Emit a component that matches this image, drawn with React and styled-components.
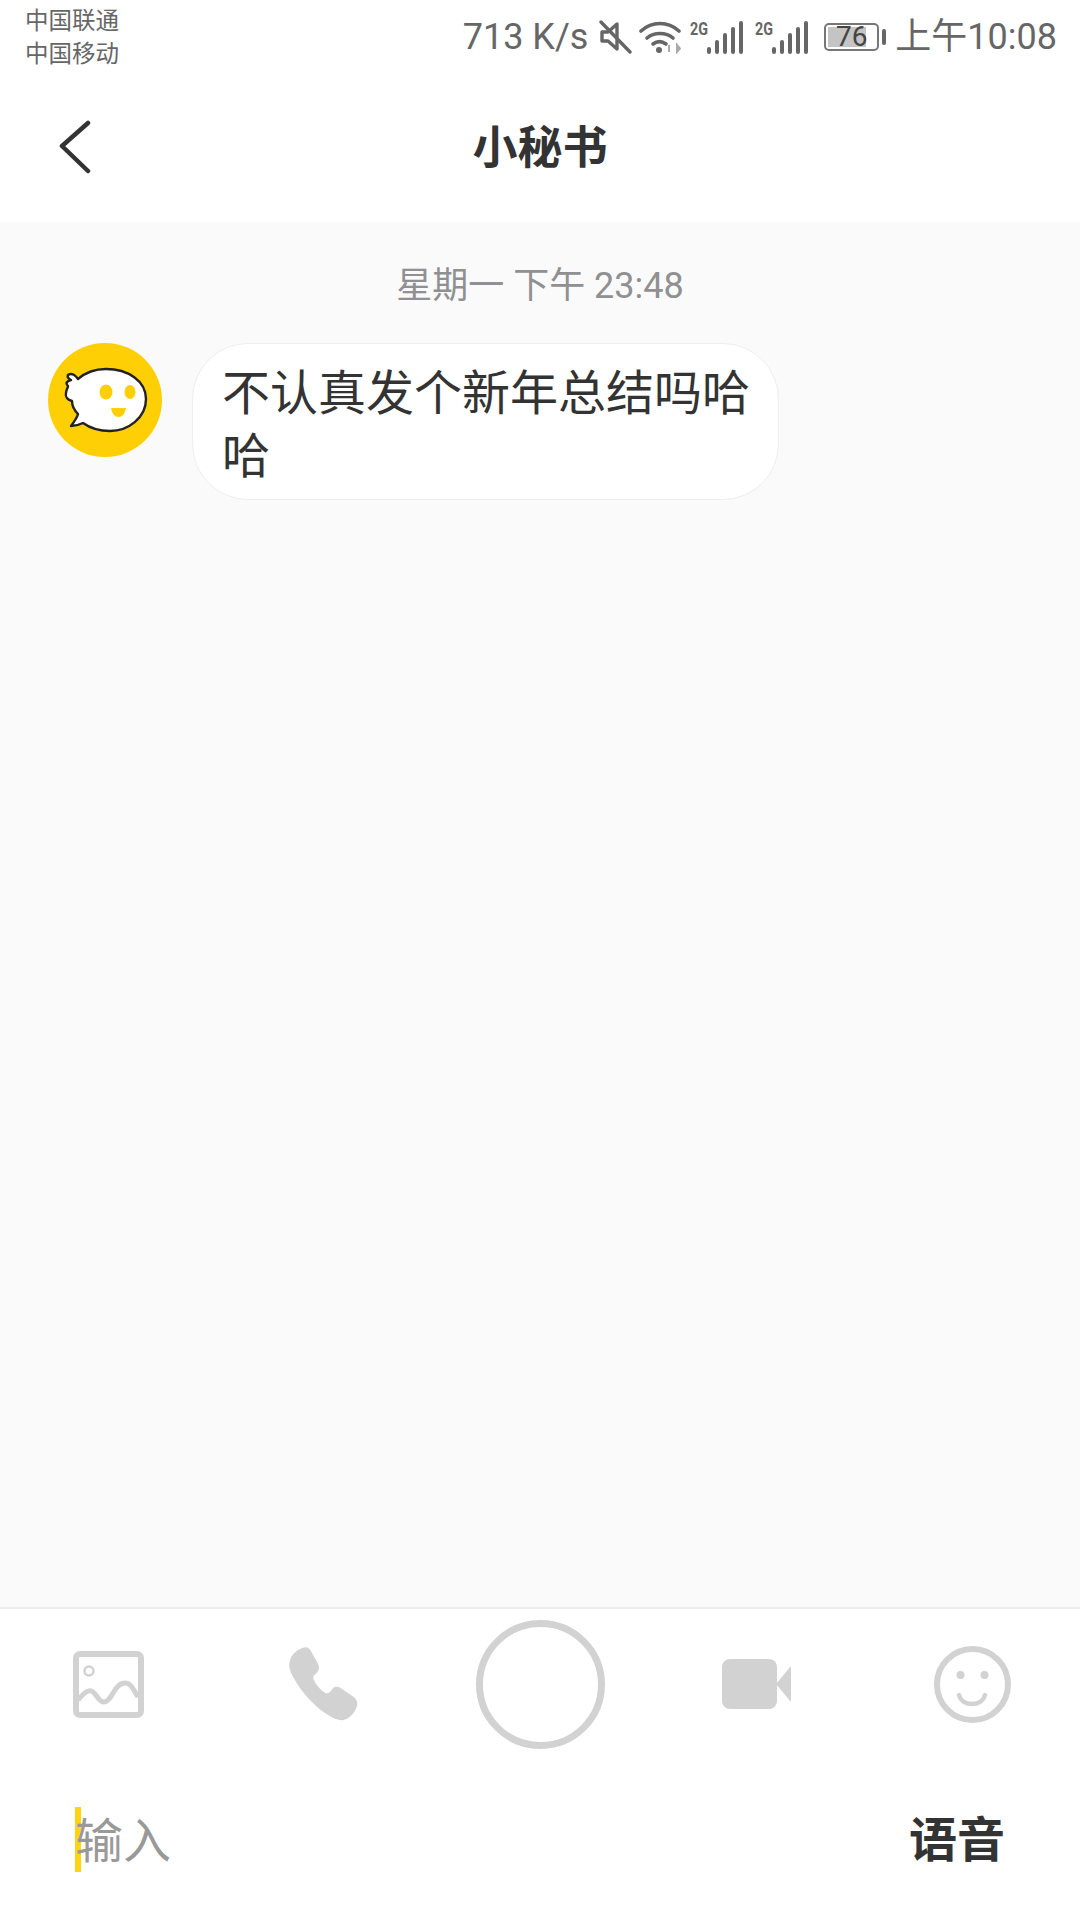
import React from "react";
import styled, { createGlobalStyle } from "styled-components";

const GlobalStyle = createGlobalStyle`
  html, body {
    margin: 0;
    padding: 0;
    background: #fff;
  }
  body {
    font-family: Roboto, "Noto Sans CJK SC", sans-serif;
  }
`;

const Page = styled.div`
  width: 1080px;
  height: 1920px;
  display: flex;
  flex-direction: column;
  background: #fff;
  overflow: hidden;
`;

const StatusBar = styled.div`
  height: 74px;
  flex: none;
  display: flex;
  align-items: center;
  justify-content: space-between;
  padding: 0 23px 0 25px;
  color: #666;
`;

const Carriers = styled.div`
  font-size: 23.5px;
  line-height: 33px;
  margin-top: 1px;
  color: #666;
`;

const StatusRight = styled.div`
  display: flex;
  align-items: center;
  height: 36px;
`;

const Speed = styled.span`
  font-size: 36px;
  line-height: 36px;
  margin-right: 11px;
`;

const StatusIcon = styled.svg`
  display: block;
  flex: none;
  margin-right: ${(p) => p.$gap || 0}px;
`;

const SignalSvg = styled(StatusIcon)`
  margin-top: -6px;
`;

const Battery = styled.div`
  position: relative;
  width: 55px;
  height: 28px;
  box-sizing: border-box;
  border: 2px solid #777;
  border-radius: 5px;
  margin-right: 3px;
  font-size: 28px;
  line-height: 24px;
  text-align: center;
  color: #444;
`;

const BatteryFill = styled.div`
  position: absolute;
  left: 2px;
  top: 2px;
  bottom: 2px;
  background: #c4c4c4;
`;

const BatteryNum = styled.span`
  position: relative;
`;

const BatteryTip = styled.div`
  width: 4px;
  height: 16px;
  border-radius: 2px;
  background: #666;
  margin-right: 9px;
`;

const Clock = styled.span`
  font-size: 36px;
  line-height: 36px;
  color: #666;
`;

const NavBar = styled.div`
  height: 148px;
  flex: none;
  display: flex;
  align-items: center;
  justify-content: center;
  position: relative;
`;

const BackButton = styled.svg`
  position: absolute;
  left: 58px;
  top: 46px;
`;

const Title = styled.h1`
  margin: 1px 0 0;
  font-size: 45px;
  line-height: 60px;
  font-weight: 700;
  color: #333;
`;

const Messages = styled.div`
  flex: 1;
  background: #fafafa;
  padding-top: 44px;
  display: flex;
  flex-direction: column;
`;

const TimeStamp = styled.div`
  text-align: center;
  font-size: 36px;
  line-height: 40px;
  color: #909092;
  margin-bottom: 37px;
`;

const MessageRow = styled.div`
  display: flex;
  align-items: flex-start;
  padding-left: 48px;
  gap: 30px;
`;

const Avatar = styled.div`
  width: 114px;
  height: 114px;
  flex: none;
  border-radius: 50%;
  background: #ffcf06;
  display: flex;
  align-items: center;
  justify-content: center;
`;

const Bubble = styled.div`
  box-sizing: border-box;
  width: 587px;
  height: 157px;
  padding: 18px 20px 12px 29px;
  background: #fff;
  border: 1px solid #eeeeee;
  border-radius: 56px;
  font-size: 48px;
  line-height: 63px;
  color: #333;
  word-break: break-all;
`;

const BottomPanel = styled.div`
  flex: none;
  height: 313px;
  box-sizing: border-box;
  border-top: 2px solid #ededed;
  background: #fff;
  display: flex;
  flex-direction: column;
`;

const ToolRow = styled.div`
  display: grid;
  grid-template-columns: repeat(5, 216px);
  height: 150px;
  align-items: center;
  justify-items: center;
`;

const RecordButton = styled.div`
  width: 129px;
  height: 129px;
  box-sizing: border-box;
  border: 7px solid #d2d2d2;
  border-radius: 50%;
`;

const InputRow = styled.div`
  display: flex;
  align-items: center;
  justify-content: space-between;
  padding: 48px 75px 0 75px;
`;

const InputField = styled.div`
  display: flex;
  align-items: center;
`;

const Caret = styled.div`
  width: 6px;
  height: 65px;
  background: #fdd40e;
`;

const Placeholder = styled.span`
  font-size: 48px;
  line-height: 65px;
  color: #999;
  margin-left: -6px;
  position: relative;
  top: 2px;
`;

const VoiceLabel = styled.span`
  font-size: 48px;
  line-height: 65px;
  font-weight: 700;
  color: #333;
  position: relative;
  top: 1px;
`;

const MuteIcon = () => (
  <StatusIcon width="33" height="34" viewBox="0 0 33 34" $gap={7}>
    <path d="M3 12h6l9-8v25l-9-8H3z" fill="none" stroke="#666" strokeWidth="3.4" strokeLinejoin="round" />
    <path d="M2 2l29 30" stroke="#666" strokeWidth="3.4" strokeLinecap="round" />
  </StatusIcon>
);

const WifiIcon = () => (
  <StatusIcon width="42" height="34" viewBox="0 0 42 34" $gap={8}>
    <path d="M2 11c11-10 27-10 38 0" fill="none" stroke="#666" strokeWidth="3.6" strokeLinecap="round" />
    <path d="M8 18c7-6 19-6 26 0" fill="none" stroke="#666" strokeWidth="3.6" strokeLinecap="round" />
    <path d="M14 24c4-3 9-3 13 0" fill="none" stroke="#666" strokeWidth="3.6" strokeLinecap="round" />
    <circle cx="20" cy="30" r="3" fill="#666" />
    <path d="M30 25v7M38 25l3 3.5-3 3.500z" stroke="#aaa" strokeWidth="2" fill="#aaa" />
  </StatusIcon>
);

const SignalIcon = ({ gap }) => (
  <SignalSvg width="56" height="40" viewBox="0 -6 56 40" $gap={gap - 2}>
    <text x="1" y="15" fontFamily="Roboto, sans-serif" fontSize="19" fontWeight="700" fill="#666" textLength="18" lengthAdjust="spacingAndGlyphs">2G</text>
    <g fill="#666">
      <rect x="18" y="27" width="4" height="7" rx="2" />
      <rect x="26" y="20" width="4" height="14" rx="2" />
      <rect x="34" y="13" width="4" height="21" rx="2" />
      <rect x="42" y="7" width="4" height="27" rx="2" />
      <rect x="50" y="1" width="4" height="33" rx="2" />
    </g>
  </SignalSvg>
);

const BubbleLogo = () => (
  <svg width="85" height="66" viewBox="-1 -1 85 66">
    <path
      d="M4 7C8 4 12 8 14 11C22 4 30 1 42 1C64 1 82 13 82 31C82 50 64 63 46 63C36 63 26 60 19 55C15 57 11 58 7 58C10 54 13 50 14 46C10 42 8 38 8 33C4 32 1 29 2 25C2 22 4 20 4 18C1 15 3 13 7 12C5 11 3 9 4 7z"
      fill="#fff"
      stroke="#222"
      strokeWidth="2.4"
      strokeLinejoin="round"
    />
    <ellipse cx="42" cy="24" rx="6.500" ry="7.500" fill="#ffcf06" />
    <ellipse cx="66" cy="24" rx="5.500" ry="7" fill="#ffcf06" />
    <path d="M47 40h15c-1 6-4 9-7.500 9s-6.500-3-7.500-9z" fill="#ffcf06" />
  </svg>
);

const ImageIcon = () => (
  <svg width="71" height="67" viewBox="0 0 71 67">
    <rect x="3" y="3" width="65" height="61" rx="4" fill="none" stroke="#d2d2d2" strokeWidth="6" />
    <circle cx="16" cy="20" r="4.500" fill="none" stroke="#d2d2d2" strokeWidth="2.500" />
    <path d="M5 49c5-6 9-10 13-9 5 1 7 11 13 11 8 0 10-19 21-19 6 0 8 6 13 14" fill="none" stroke="#d2d2d2" strokeWidth="5" />
  </svg>
);

const PhoneIcon = () => (
  <svg width="70" height="74" viewBox="0 0 68 72">
    <path
      d="M13 1c4-2 7 0 9 4l6 11c2 4 1 7-1 9l-3 3c-1 2 0 5 3 9 3 4 6 7 9 8 2 0 4-1 6-4 2-3 5-3 8-1l12 8c4 3 5 6 4 10-2 6-7 12-13 13-5 1-11-2-17-6C24 57 12 44 5 31 1 24-1 19 1 13 2 8 7 3 13 1z"
      fill="#d2d2d2"
    />
  </svg>
);

const VideoIcon = () => (
  <svg width="69" height="50" viewBox="0 0 69 50">
    <rect x="0" y="0" width="55" height="50" rx="8" fill="#d2d2d2" />
    <path d="M54 25L69 7v36z" fill="#d2d2d2" />
  </svg>
);

const SmileIcon = () => (
  <svg width="77" height="77" viewBox="0 0 77 77">
    <circle cx="38.500" cy="38.500" r="35.500" fill="none" stroke="#d2d2d2" strokeWidth="6" />
    <circle cx="26.500" cy="29" r="4" fill="#d2d2d2" />
    <circle cx="50.500" cy="29" r="4" fill="#d2d2d2" />
    <path d="M25 49c3 12 23 12 26 0" fill="none" stroke="#d2d2d2" strokeWidth="4.500" strokeLinecap="round" />
  </svg>
);

export default function App() {
  return (
    <Page>
      <GlobalStyle />
      <StatusBar>
        <Carriers>
          <div>中国联通</div>
          <div>中国移动</div>
        </Carriers>
        <StatusRight>
          <Speed>713 K/s</Speed>
          <MuteIcon />
          <WifiIcon />
          <SignalIcon gap={11} />
          <SignalIcon gap={16} />
          <Battery>
            <BatteryFill style={{ width: `${76 * 0.5}px` }} />
            <BatteryNum>76</BatteryNum>
          </Battery>
          <BatteryTip />
          <Clock>上午10:08</Clock>
        </StatusRight>
      </StatusBar>

      <NavBar>
        <BackButton width="34" height="54" viewBox="0 0 34 54">
          <path d="M30 3L4 26l26 25" fill="none" stroke="#333" strokeWidth="4.500" strokeLinecap="round" strokeLinejoin="round" />
        </BackButton>
        <Title>小秘书</Title>
      </NavBar>

      <Messages>
        <TimeStamp>星期一 下午 23:48</TimeStamp>
        <MessageRow>
          <Avatar>
            <BubbleLogo />
          </Avatar>
          <Bubble>不认真发个新年总结吗哈哈</Bubble>
        </MessageRow>
      </Messages>

      <BottomPanel>
        <ToolRow>
          <ImageIcon />
          <PhoneIcon />
          <RecordButton />
          <VideoIcon />
          <SmileIcon />
        </ToolRow>
        <InputRow>
          <InputField>
            <Caret />
            <Placeholder>输入</Placeholder>
          </InputField>
          <VoiceLabel>语音</VoiceLabel>
        </InputRow>
      </BottomPanel>
    </Page>
  );
}
